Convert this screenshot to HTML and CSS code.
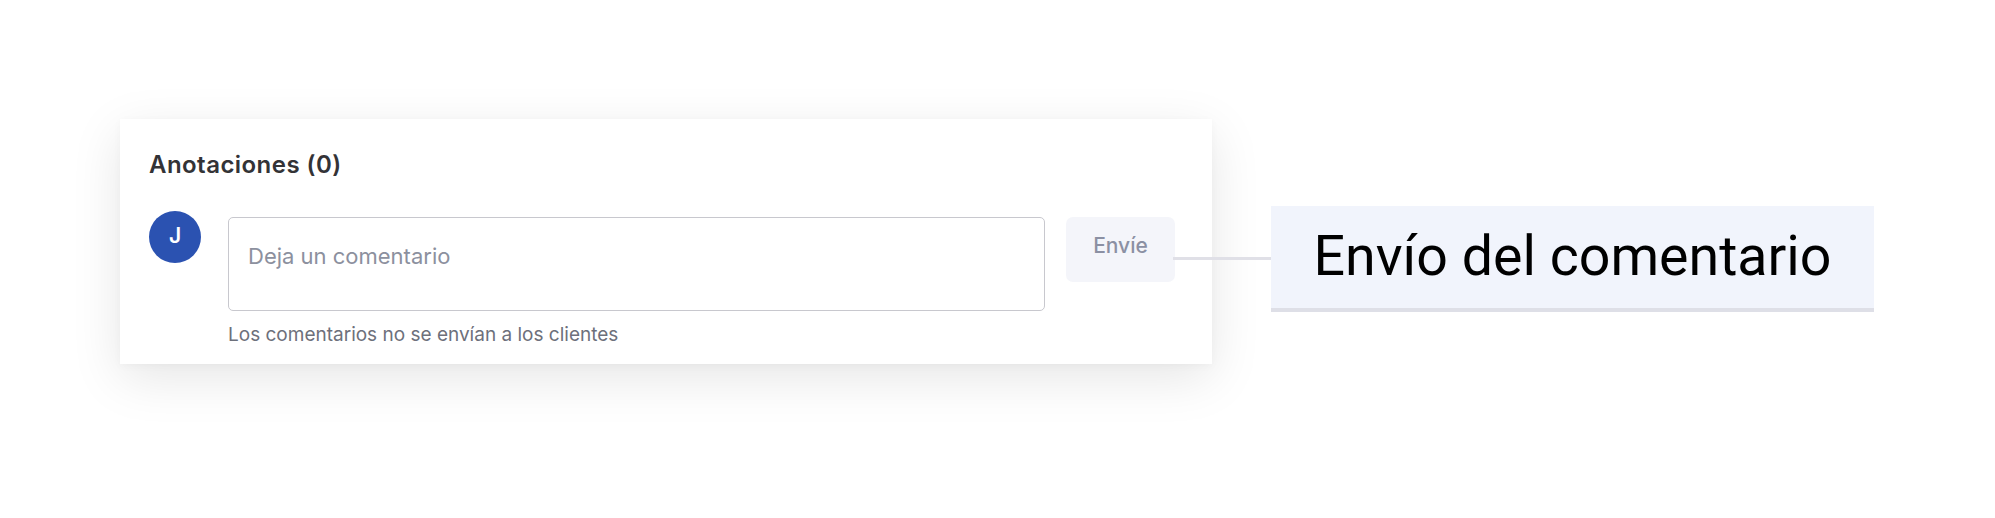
FILE: index.html
```html
<!DOCTYPE html>
<html lang="es">
<head>
<meta charset="utf-8">
<title>Anotaciones</title>
<link rel="stylesheet" href="styles.css">
</head>
<body>
<div class="stage">
  <section class="card">
    <h2 class="card-title">Anotaciones (0)</h2>
    <div class="comment-row">
      <div class="avatar">J</div>
      <div class="field">
        <textarea class="comment-input" placeholder="Deja un comentario"></textarea>
        <p class="hint">Los comentarios no se envían a los clientes</p>
      </div>
      <button class="send-btn" type="button">Envíe</button>
    </div>
  </section>
  <div class="callout">Envío del comentario</div>
</div>
</body>
</html>
```
FILE: styles.css
```css
* { box-sizing: border-box; }
html, body {
  margin: 0;
  background: #ffffff;
}
body {
  font-family: Inter, "Liberation Sans", sans-serif;
}
.stage {
  display: flex;
  align-items: flex-start;
  padding: 119px 0 150px 120px;
}
.card {
  width: 1092px;
  height: 245px;
  background: #ffffff;
  box-shadow: 0 14px 48px rgba(0, 0, 0, 0.1), 0 2px 8px rgba(0, 0, 0, 0.03);
  padding: 31px 29px 18px;
}
.card-title {
  margin: 0;
  font-size: 24px;
  line-height: 29px;
  font-weight: 600;
  letter-spacing: 0.45px;
  color: #333336;
}
.comment-row {
  display: flex;
  align-items: flex-start;
  margin-top: 32px;
}
.avatar {
  width: 52px;
  height: 52px;
  flex: none;
  border-radius: 50%;
  background: #2b52b1;
  color: #ffffff;
  font-size: 21px;
  font-weight: 600;
  display: flex;
  align-items: center;
  justify-content: center;
  padding-bottom: 3px;
}
.field {
  margin: 6px 0 0 27px;
  width: 817px;
}
.comment-input {
  display: block;
  width: 817px;
  height: 94px;
  margin: 0;
  padding: 25px 19px;
  border: 1.5px solid #c8c8ce;
  border-radius: 5px;
  resize: none;
  font-family: Inter, "Liberation Sans", sans-serif;
  font-size: 22px;
  line-height: 27px;
  color: #333;
  background: #ffffff;
  outline: none;
}
.comment-input::placeholder {
  color: #8c909e;
}
.hint {
  margin: 12px 0 0;
  font-size: 19px;
  line-height: 23px;
  color: #6d707b;
}
.send-btn {
  margin: 6px 0 0 21px;
  width: 109px;
  height: 65px;
  border: none;
  border-radius: 7px;
  background: #f4f5fa;
  color: #8b90a3;
  font-family: Inter, "Liberation Sans", sans-serif;
  font-size: 21px;
  font-weight: 500;
  line-height: 26px;
  padding: 16px 0 0;
  display: flex;
  justify-content: center;
  align-items: flex-start;
}
.callout {
  position: relative;
  margin: 87px 0 0 59px;
  width: 603px;
  height: 106px;
  background: #f1f4fc;
  border-bottom: 4px solid #dedfe7;
  font-family: Roboto, "Liberation Sans", sans-serif;
  font-size: 55.5px;
  line-height: 102px;
  color: #000000;
  text-align: center;
}
.callout::before {
  content: "";
  position: absolute;
  left: -98px;
  top: 51px;
  width: 98px;
  height: 3px;
  background: #e0e0e7;
}
```
